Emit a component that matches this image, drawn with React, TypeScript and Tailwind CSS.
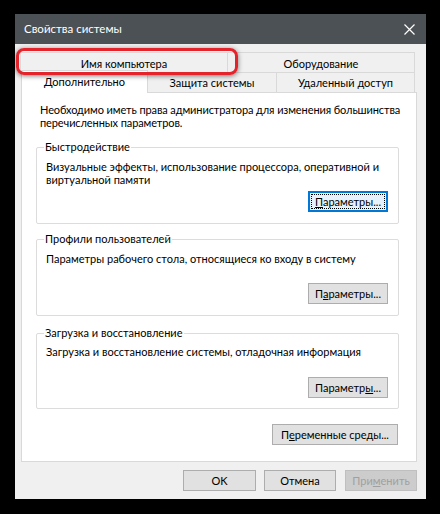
import React from "react";

type BtnProps = {
  children: React.ReactNode;
  className?: string;
  primary?: boolean;
  disabled?: boolean;
};

function Button({ children, className = "", primary = false, disabled = false }: BtnProps) {
  if (primary) {
    return (
      <div
        className={`h-[21px] bg-[#e5f1fb] border-2 border-[#0078d7] flex items-center justify-center p-[1px] whitespace-nowrap ${className}`}
      >
        <div className="w-full h-full border border-dotted border-black flex items-center justify-center">
          {children}
        </div>
      </div>
    );
  }
  return (
    <div
      className={`h-[21px] flex items-center justify-center border whitespace-nowrap ${
        disabled
          ? "bg-[#cccccc] border-[#bfbfbf] text-[#a0a0a0]"
          : "bg-[#e1e1e1] border-[#adadad] text-black"
      } ${className}`}
    >
      {children}
    </div>
  );
}

type GroupProps = {
  title: string;
  height: string;
  children: React.ReactNode;
};

function Group({ title, height, children }: GroupProps) {
  return (
    <fieldset
      className={`w-[363px] min-w-0 ${height} border border-[#dcdcdc] rounded-[2px] pl-[9px] pr-[10px]`}
    >
      <legend className="ml-[-2px] px-[1px] leading-[14px]">{title}</legend>
      {children}
    </fieldset>
  );
}

export default function App() {
  return (
    <div className="w-[440px] h-[514px] bg-black pt-[14px] pl-[15px] font-['Lato',sans-serif] text-[11px] leading-[13px] text-black whitespace-nowrap">
      <div className="relative w-[411px] h-[485px] bg-[#f0f0f0] flex flex-col">
        {/* title bar */}
        <div className="h-[30px] shrink-0 bg-[#4c5156] flex items-center justify-between pl-[9px] pr-[11px]">
          <span className="text-white text-[11.5px] leading-[16px]">Свойства системы</span>
          <svg width="11" height="11" viewBox="0 0 11 11">
            <path d="M0.5 0.5 L10.5 10.5 M10.5 0.5 L0.5 10.5" stroke="#ffffff" strokeWidth="1.2" />
          </svg>
        </div>

        {/* back row of tabs */}
        <div className="mt-[8px] ml-[5px] flex h-[20px]">
          <div className="w-[208px] border-l border-t border-r border-[#d9d9d9] bg-[#f0f0f0] flex items-center justify-center pt-[1px]">
            Имя компьютера
          </div>
          <div className="w-[187px] border-t border-r border-[#d9d9d9] bg-[#f0f0f0] flex items-center justify-center pt-[1px]">
            Оборудование
          </div>
        </div>

        {/* front row of tabs */}
        <div className="ml-[6px] flex h-[20px] items-start">
          <div className="relative z-10 -mt-[2px] w-[127px] h-[23px] bg-white border-l border-t border-r border-[#d9d9d9] flex items-center justify-center pb-[2px]">
            Дополнительно
          </div>
          <div className="w-[129px] h-[20px] border-t border-r border-[#d9d9d9] bg-[#f0f0f0] flex items-center justify-center">
            Защита системы
          </div>
          <div className="w-[138px] h-[20px] border-t border-r border-[#d9d9d9] bg-[#f0f0f0] flex items-center justify-center">
            Удаленный доступ
          </div>
        </div>

        {/* tab page */}
        <div className="ml-[6px] w-[396px] h-[370px] bg-white border border-[#d9d9d9] pt-[10px] pl-[14px] flex flex-col">
          <p className="pl-[4px] tracking-[-0.1px]">
            Необходимо иметь права администратора для изменения большинства
            <br />
            перечисленных параметров.
          </p>

          <div className="mt-[11px]">
            <Group title="Быстродействие" height="h-[84px]">
              <p className="mt-[6px]">
                Визуальные эффекты, использование процессора, оперативной и
                <br />
                виртуальной памяти
              </p>
              <div className="mt-[5px] flex justify-end">
                <Button primary className="w-[80px]">
                  <span>
                    <u>П</u>араметры...
                  </span>
                </Button>
              </div>
            </Group>
          </div>

          <div className="mt-[8px]">
            <Group title="Профили пользователей" height="h-[84px]">
              <p className="mt-[6px]">Параметры рабочего стола, относящиеся ко входу в систему</p>
              <div className="mt-[18px] flex justify-end">
                <Button className="w-[80px]">
                  <span>
                    П<u>а</u>раметры...
                  </span>
                </Button>
              </div>
            </Group>
          </div>

          <div className="mt-[10px]">
            <Group title="Загрузка и восстановление" height="h-[83px]">
              <p className="mt-[5px]">Загрузка и восстановление системы, отладочная информация</p>
              <div className="mt-[19px] flex justify-end">
                <Button className="w-[80px]">
                  <span>
                    Параметр<u>ы</u>...
                  </span>
                </Button>
              </div>
            </Group>
          </div>

          <div className="w-[363px] mt-[15px] flex justify-end pr-[1px]">
            <Button className="w-[126px]">
              <span>
                П<u>е</u>ременные среды...
              </span>
            </Button>
          </div>
        </div>

        {/* dialog buttons */}
        <div className="mt-[8px] flex justify-end pr-[9px]">
          <Button className="w-[73px] mr-[8px]">OK</Button>
          <Button className="w-[72px] mr-[9px]">Отмена</Button>
          <Button disabled className="w-[72px]">
            <span>
              При<u>м</u>енить
            </span>
          </Button>
        </div>

        {/* red marker around the first tab */}
        <div className="absolute left-[1px] top-[34px] w-[222px] h-[27px] rounded-[8px] border-[3px] border-[#e5232a] shadow-[0_1px_5px_rgba(0,0,0,0.5)] z-20 pointer-events-none" />
      </div>
    </div>
  );
}
